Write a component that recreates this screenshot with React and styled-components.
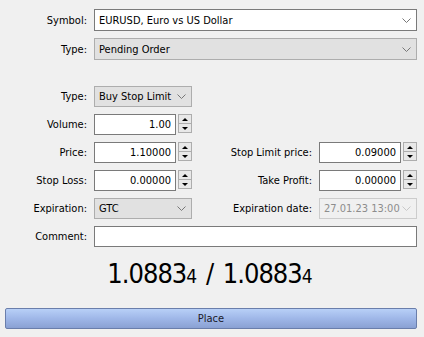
import React from "react";
import styled, { createGlobalStyle } from "styled-components";

const GlobalStyle = createGlobalStyle`
  html, body {
    margin: 0;
    padding: 0;
    background: #f0f0f0;
  }
  body {
    font-family: "DejaVu Sans Condensed", "DejaVu Sans", Tahoma, sans-serif;
    font-size: 11px;
    color: #000;
  }
`;

const Window = styled.div`
  width: 424px;
  height: 337px;
  box-sizing: border-box;
  padding: 9px 7px 0 0;
  background: #f0f0f0;
  display: flex;
  flex-direction: column;
`;

const Grid = styled.div`
  display: grid;
  grid-template-columns: 87px 98px 1fr 98px;
  column-gap: 7px;
  row-gap: ${({ $gap }) => $gap}px;
  grid-auto-rows: ${({ $row }) => $row}px;
  margin-top: ${({ $top }) => $top || 0}px;
`;

const Label = styled.label`
  display: flex;
  align-items: center;
  justify-content: flex-end;
  white-space: nowrap;
`;

const Box = styled.div`
  grid-column: ${({ $span }) => $span || "auto"};
  box-sizing: border-box;
  height: 100%;
  display: flex;
  align-items: center;
  padding: 0 3px 0 4px;
  border: 1px solid ${({ $tone }) =>
    $tone === "white" ? "#7a7a7a" : $tone === "off" ? "#cccccc" : "#adadad"};
  background: ${({ $tone }) =>
    $tone === "white" ? "#ffffff" : $tone === "off" ? "#f0f0f0" : "#e1e1e1"};
  color: ${({ $tone }) => ($tone === "off" ? "#8d8d8d" : "#000")};
  white-space: nowrap;
`;

const BoxText = styled.span`
  flex: 1;
  overflow: hidden;
`;

const Chevron = ({ off }) => (
  <svg width="9" height="5" viewBox="0 0 9 5" style={{ flexShrink: 0, marginRight: 2 }}>
    <path d="M0.5 0.5 L4.5 4.5 L8.5 0.5" fill="none" stroke={off ? "#c8c8c8" : "#777777"} strokeWidth="1" />
  </svg>
);

const Select = ({ value, tone, span, off }) => (
  <Box $tone={tone} $span={span}>
    <BoxText>{value}</BoxText>
    <Chevron off={off} />
  </Box>
);

const Spin = styled.div`
  display: flex;
  align-items: flex-start;
  gap: 2px;
  height: 100%;
`;

const Field = styled.div`
  box-sizing: border-box;
  width: 82px;
  height: 100%;
  border: 1px solid #7a7a7a;
  background: #fff;
  display: flex;
  align-items: center;
  justify-content: flex-end;
  padding-right: 4px;
`;

const Arrows = styled.div`
  display: flex;
  flex-direction: column;
  width: 14px;
  height: 19px;
`;

const Arrow = styled.div`
  flex: 1;
  box-sizing: border-box;
  border: 1px solid #adadad;
  border-top-width: ${({ $down }) => ($down ? 0 : 1)}px;
  background: #e8e8e8;
  display: flex;
  align-items: center;
  justify-content: center;
  &::after {
    content: "";
    border-left: 3px solid transparent;
    border-right: 3px solid transparent;
    ${({ $down }) => ($down ? "border-top: 3px solid #000;" : "border-bottom: 3px solid #000;")}
  }
`;

const Spinner = ({ value }) => (
  <Spin>
    <Field>{value}</Field>
    <Arrows>
      <Arrow />
      <Arrow $down />
    </Arrows>
  </Spin>
);

const Quote = styled.div`
  margin-top: 11px;
  padding-left: 2px;
  text-align: center;
  font-size: 27px;
  line-height: 32px;
  letter-spacing: -1px;
  word-spacing: 3px;
`;

const Pip = styled.span`
  font-size: 19px;
`;

const PlaceButton = styled.button`
  margin: 16px 0 0 5px;
  height: 21px;
  box-sizing: border-box;
  border: 1px solid #6a7eab;
  border-radius: 2px;
  background: linear-gradient(#b8d0f7, #9fb7e8 50%, #8aa1d3);
  font-family: "DejaVu Sans Condensed", "DejaVu Sans", Tahoma, sans-serif;
  font-size: 11px;
  color: #1a1a2a;
  padding: 0;
`;

const Empty = styled.div``;

export default function App() {
  return (
    <>
      <GlobalStyle />
      <Window>
        <Grid $row={22} $gap={7}>
          <Label>Symbol:</Label>
          <Select value="EURUSD, Euro vs US Dollar" tone="white" span="2 / 5" />
          <Label>Type:</Label>
          <Select value="Pending Order" span="2 / 5" />
        </Grid>
        <Grid $row={21} $gap={7} $top={26}>
          <Label>Type:</Label>
          <Select value="Buy Stop Limit" />
          <Empty />
          <Empty />

          <Label>Volume:</Label>
          <Spinner value="1.00" />
          <Empty />
          <Empty />

          <Label>Price:</Label>
          <Spinner value="1.10000" />
          <Label>Stop Limit price:</Label>
          <Spinner value="0.09000" />

          <Label>Stop Loss:</Label>
          <Spinner value="0.00000" />
          <Label>Take Profit:</Label>
          <Spinner value="0.00000" />

          <Label>Expiration:</Label>
          <Select value="GTC" />
          <Label>Expiration date:</Label>
          <Select value="27.01.23 13:00" tone="off" off />

          <Label>Comment:</Label>
          <Box $tone="white" $span="2 / 5" />
        </Grid>
        <Quote>
          1.0883<Pip>4</Pip> / 1.0883<Pip>4</Pip>
        </Quote>
        <PlaceButton>Place</PlaceButton>
      </Window>
    </>
  );
}
